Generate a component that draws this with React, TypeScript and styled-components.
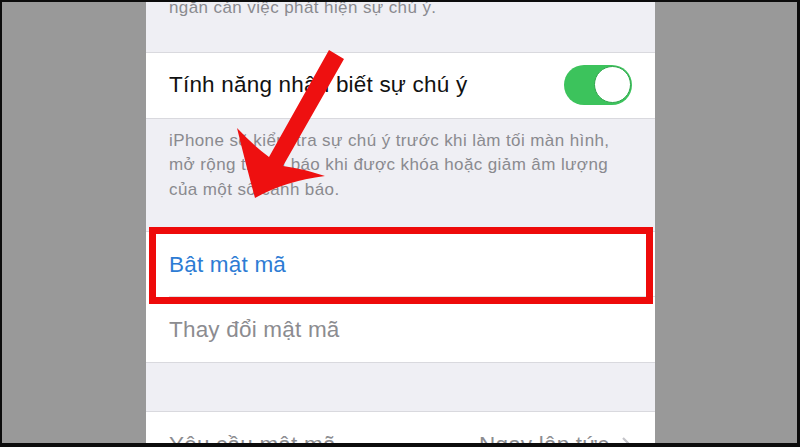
import React from 'react';
import styled, { createGlobalStyle } from 'styled-components';

const GlobalStyle = createGlobalStyle`
  html, body {
    margin: 0;
    padding: 0;
    background: #000;
  }
  body {
    font-family: "Liberation Sans", Arial, sans-serif;
  }
`;

const Frame = styled.div`
  box-sizing: border-box;
  width: 800px;
  height: 447px;
  border-style: solid;
  border-color: #0c0c0c;
  border-width: 2px 3px 4px 2px;
  display: flex;
  background: #999999;
  overflow: hidden;
`;

const Side = styled.div<{ $w: number }>`
  width: ${(p) => p.$w}px;
  flex: none;
  background: #999999;
`;

const Phone = styled.div`
  position: relative;
  width: 509px;
  flex: none;
  background: #efeff4;
  overflow: hidden;
  display: flex;
  flex-direction: column;
`;

const Footer = styled.div<{ $top?: number; $bottom?: number }>`
  padding: ${(p) => p.$top ?? 0}px 20px ${(p) => p.$bottom ?? 0}px 23px;
  font-size: 17px;
  letter-spacing: 0.4px;
  line-height: 24.5px;
  color: #8a8a8f;
  white-space: nowrap;
`;

const Group = styled.div`
  background: #fff;
  border-top: 1px solid #d9d9de;
  border-bottom: 1px solid #d9d9de;
  flex: none;
`;

const Row = styled.div<{ $divider?: boolean }>`
  height: 65px;
  display: flex;
  align-items: center;
  justify-content: space-between;
  padding: 0 23px;
  position: relative;
  ${(p) =>
    p.$divider &&
    `
    &::after {
      content: '';
      position: absolute;
      left: 23px;
      right: 0;
      bottom: 0;
      height: 1px;
      background: #e0e0e4;
    }
  `}
`;

const Label = styled.span<{ $tone?: 'dark' | 'blue' | 'muted' }>`
  font-size: 22.5px;
  letter-spacing: 0.2px;
  color: ${(p) =>
    p.$tone === 'blue' ? '#2d7cd4' : p.$tone === 'muted' ? '#8c8c90' : '#111'};
`;

const Value = styled.span`
  display: flex;
  align-items: center;
  gap: 12px;
  font-size: 22.5px;
  letter-spacing: 0.2px;
  color: #8c8c90;
`;

const Gap = styled.div<{ $h: number }>`
  height: ${(p) => p.$h}px;
  flex: none;
`;

const Switch = styled.div`
  width: 68px;
  height: 40px;
  border-radius: 20px;
  background: #3cc35c;
  position: relative;
  flex: none;
`;

const Knob = styled.div`
  position: absolute;
  right: 1px;
  top: 1px;
  width: 35px;
  height: 35px;
  border-radius: 50%;
  background: #fff;
  border: 1.5px solid #2fa64c;
`;

const Highlight = styled.div`
  position: absolute;
  left: 3px;
  top: 225px;
  width: 504px;
  height: 77px;
  box-sizing: border-box;
  border: 7px solid #ee0a0a;
  pointer-events: none;
`;

const ArrowLayer = styled.svg`
  position: absolute;
  left: 0;
  top: 0;
  width: 509px;
  height: 443px;
  pointer-events: none;
`;

// arrow coordinates are in page pixels, shifted by the phone's offset (146, 2)
const Arrow = () => (
  <ArrowLayer viewBox="146 2 509 443">
    <path
      fill="#ee1010"
      d="M329 50 L344 59 L283 166 Q300 168 325 176 Q285 181 255 198 Q246 165 237 128 Q255 147 269 157 Z"
    />
  </ArrowLayer>
);

const Chevron = () => (
  <svg width="11" height="18" viewBox="0 0 11 18">
    <path d="M2 2 L9 9 L2 16" fill="none" stroke="#c4c4c9" strokeWidth="2.2" />
  </svg>
);

export default function App() {
  return (
    <>
      <GlobalStyle />
      <Frame>
        <Side $w={144} />
        <Phone>
          <Footer $top={0} $bottom={31} style={{ marginTop: -6 }}>
            ngăn cản việc phát hiện sự chú ý.
          </Footer>
          <Group>
            <Row>
              <Label>Tính năng nhận biết sự chú ý</Label>
              <Switch>
                <Knob />
              </Switch>
            </Row>
          </Group>
          <Footer $top={10} $bottom={29}>
            iPhone sẽ kiểm tra sự chú ý trước khi làm tối màn hình,
            <br />
            mở rộng thông báo khi được khóa hoặc giảm âm lượng
            <br />
            của một số cảnh báo.
          </Footer>
          <Group>
            <Row $divider>
              <Label $tone="blue">Bật mật mã</Label>
            </Row>
            <Row>
              <Label $tone="muted">Thay đổi mật mã</Label>
            </Row>
          </Group>
          <Gap $h={48} />
          <Group>
            <Row>
              <Label $tone="muted">Yêu cầu mật mã</Label>
              <Value>
                Ngay lập tức
                <Chevron />
              </Value>
            </Row>
          </Group>
          <Highlight />
          <Arrow />
        </Phone>
        <Side $w={142} />
      </Frame>
    </>
  );
}
